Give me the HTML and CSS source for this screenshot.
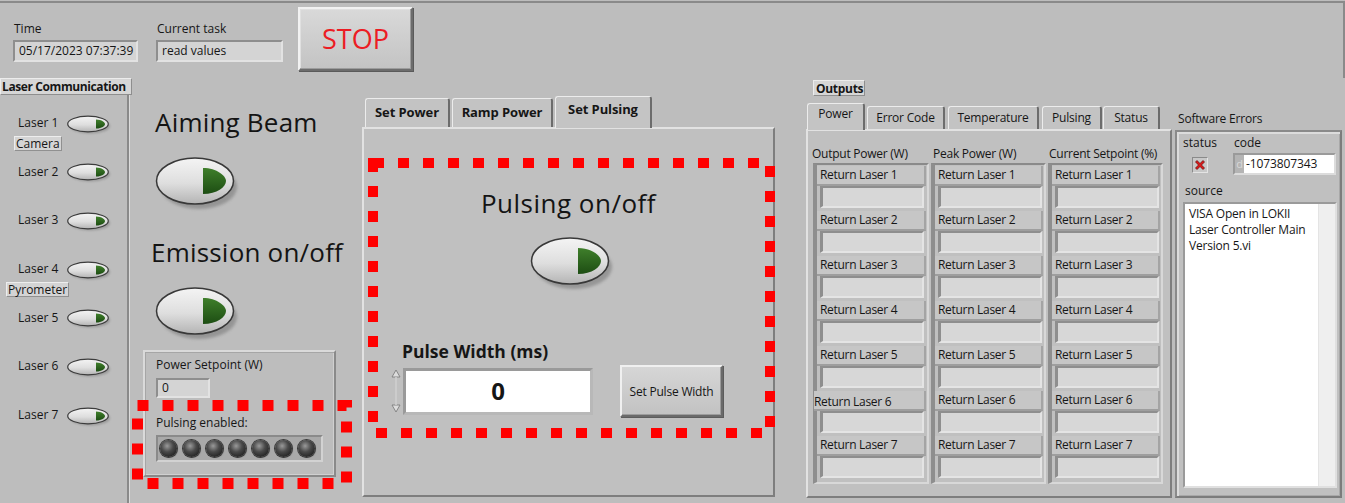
FILE: index.html
```html
<!DOCTYPE html>
<html>
<head>
<meta charset="utf-8">
<title>Laser Controller</title>
<link rel="stylesheet" href="styles.css">
</head>
<body>
<div class="app">
  <svg class="defs" width="0" height="0" aria-hidden="true">
    <defs>
      <linearGradient id="swBody" x1="0" y1="0" x2="0" y2="1">
        <stop offset="0" stop-color="#f4f4f4"/>
        <stop offset="0.55" stop-color="#dedede"/>
        <stop offset="1" stop-color="#b4b4b4"/>
      </linearGradient>
      <linearGradient id="swGreen" x1="0" y1="0" x2="0" y2="1">
        <stop offset="0" stop-color="#3f7f2b"/>
        <stop offset="1" stop-color="#1d4d13"/>
      </linearGradient>
      <filter id="swBlur" x="-20%" y="-20%" width="140%" height="140%"><feGaussianBlur stdDeviation="1.8"/></filter>
      <filter id="swBlurS" x="-20%" y="-20%" width="140%" height="140%"><feGaussianBlur stdDeviation="1"/></filter>
    </defs>
  </svg>

  <header class="top">
    <div class="fg fg-time">
      <div class="lbl">Time</div>
      <div class="ind ind-time">05/17/2023 07:37:39</div>
    </div>
    <div class="fg fg-task">
      <div class="lbl">Current task</div>
      <div class="ind ind-task">read values</div>
    </div>
    <button class="stop">STOP</button>
  </header>

  <div class="main">
    <section class="lasers">
      <div class="caption caption-lc">Laser Communication</div>
      <div class="laser-panel">
        <div class="laser">
          <div class="lrow"><span class="lname">Laser 1</span>
            <svg class="sw-small" viewBox="0 0 48 22" width="48" height="22"><ellipse cx="23" cy="11" rx="20" ry="7.5" fill="#7c7c7c" opacity="0.55" filter="url(#swBlurS)"/><ellipse cx="21" cy="9" rx="20.3" ry="7.8" fill="url(#swBody)" stroke="#3c3c3c" stroke-width="1.2"/><path d="M29 4.5 C35 4.5 38 7.5 38 9 C38 10.8 35 13.5 29 13.5 Z" fill="url(#swGreen)"/></svg>
          </div>
          <div class="tag tag-camera">Camera</div>
        </div>
        <div class="laser">
          <div class="lrow"><span class="lname">Laser 2</span>
            <svg class="sw-small" viewBox="0 0 48 22" width="48" height="22"><ellipse cx="23" cy="11" rx="20" ry="7.5" fill="#7c7c7c" opacity="0.55" filter="url(#swBlurS)"/><ellipse cx="21" cy="9" rx="20.3" ry="7.8" fill="url(#swBody)" stroke="#3c3c3c" stroke-width="1.2"/><path d="M29 4.5 C35 4.5 38 7.5 38 9 C38 10.8 35 13.5 29 13.5 Z" fill="url(#swGreen)"/></svg>
          </div>
        </div>
        <div class="laser">
          <div class="lrow"><span class="lname">Laser 3</span>
            <svg class="sw-small" viewBox="0 0 48 22" width="48" height="22"><ellipse cx="23" cy="11" rx="20" ry="7.5" fill="#7c7c7c" opacity="0.55" filter="url(#swBlurS)"/><ellipse cx="21" cy="9" rx="20.3" ry="7.8" fill="url(#swBody)" stroke="#3c3c3c" stroke-width="1.2"/><path d="M29 4.5 C35 4.5 38 7.5 38 9 C38 10.8 35 13.5 29 13.5 Z" fill="url(#swGreen)"/></svg>
          </div>
        </div>
        <div class="laser">
          <div class="lrow"><span class="lname">Laser 4</span>
            <svg class="sw-small" viewBox="0 0 48 22" width="48" height="22"><ellipse cx="23" cy="11" rx="20" ry="7.5" fill="#7c7c7c" opacity="0.55" filter="url(#swBlurS)"/><ellipse cx="21" cy="9" rx="20.3" ry="7.8" fill="url(#swBody)" stroke="#3c3c3c" stroke-width="1.2"/><path d="M29 4.5 C35 4.5 38 7.5 38 9 C38 10.8 35 13.5 29 13.5 Z" fill="url(#swGreen)"/></svg>
          </div>
          <div class="tag tag-pyro">Pyrometer</div>
        </div>
        <div class="laser">
          <div class="lrow"><span class="lname">Laser 5</span>
            <svg class="sw-small" viewBox="0 0 48 22" width="48" height="22"><ellipse cx="23" cy="11" rx="20" ry="7.5" fill="#7c7c7c" opacity="0.55" filter="url(#swBlurS)"/><ellipse cx="21" cy="9" rx="20.3" ry="7.8" fill="url(#swBody)" stroke="#3c3c3c" stroke-width="1.2"/><path d="M29 4.5 C35 4.5 38 7.5 38 9 C38 10.8 35 13.5 29 13.5 Z" fill="url(#swGreen)"/></svg>
          </div>
        </div>
        <div class="laser">
          <div class="lrow"><span class="lname">Laser 6</span>
            <svg class="sw-small" viewBox="0 0 48 22" width="48" height="22"><ellipse cx="23" cy="11" rx="20" ry="7.5" fill="#7c7c7c" opacity="0.55" filter="url(#swBlurS)"/><ellipse cx="21" cy="9" rx="20.3" ry="7.8" fill="url(#swBody)" stroke="#3c3c3c" stroke-width="1.2"/><path d="M29 4.5 C35 4.5 38 7.5 38 9 C38 10.8 35 13.5 29 13.5 Z" fill="url(#swGreen)"/></svg>
          </div>
        </div>
        <div class="laser">
          <div class="lrow"><span class="lname">Laser 7</span>
            <svg class="sw-small" viewBox="0 0 48 22" width="48" height="22"><ellipse cx="23" cy="11" rx="20" ry="7.5" fill="#7c7c7c" opacity="0.55" filter="url(#swBlurS)"/><ellipse cx="21" cy="9" rx="20.3" ry="7.8" fill="url(#swBody)" stroke="#3c3c3c" stroke-width="1.2"/><path d="M29 4.5 C35 4.5 38 7.5 38 9 C38 10.8 35 13.5 29 13.5 Z" fill="url(#swGreen)"/></svg>
          </div>
        </div>
      </div>
    </section>

    <section class="center">
      <div class="controls">
        <h2 class="big-label lbl-aim">Aiming Beam</h2>
        <svg class="sw-big sw-aim" viewBox="0 0 88 58" width="88" height="58"><ellipse cx="44" cy="30" rx="38" ry="22" fill="#7a7a7a" opacity="0.6" filter="url(#swBlur)"/><ellipse cx="40" cy="24" rx="38.5" ry="23" fill="url(#swBody)" stroke="#383838" stroke-width="1.5"/><path d="M48 11 C62 11 71 19 71 24 C71 30 62 37 48 37 Z" fill="url(#swGreen)"/></svg>
        <h2 class="big-label lbl-emis">Emission on/off</h2>
        <svg class="sw-big sw-emis" viewBox="0 0 88 58" width="88" height="58"><ellipse cx="44" cy="30" rx="38" ry="22" fill="#7a7a7a" opacity="0.6" filter="url(#swBlur)"/><ellipse cx="40" cy="24" rx="38.5" ry="23" fill="url(#swBody)" stroke="#383838" stroke-width="1.5"/><path d="M48 11 C62 11 71 19 71 24 C71 30 62 37 48 37 Z" fill="url(#swGreen)"/></svg>
        <div class="ps-frame">
          <div class="lbl ps-lbl">Power Setpoint (W)</div>
          <div class="ind ind-ps">0</div>
          <div class="lbl pe-lbl">Pulsing enabled:</div>
          <div class="ledbar">
            <span class="led"></span><span class="led"></span><span class="led"></span><span class="led"></span><span class="led"></span><span class="led"></span><span class="led"></span>
          </div>
        </div>
      </div>

      <div class="tabctl">
        <div class="tabs">
          <div class="tab tab-sp">Set Power</div>
          <div class="tab tab-rp">Ramp Power</div>
          <div class="tab tab-spu active">Set Pulsing</div>
        </div>
        <div class="tabbody">
          <h2 class="big-label lbl-pulse">Pulsing on/off</h2>
          <svg class="sw-big sw-pulse" viewBox="0 0 88 58" width="88" height="58"><ellipse cx="44" cy="30" rx="38" ry="22" fill="#7a7a7a" opacity="0.6" filter="url(#swBlur)"/><ellipse cx="40" cy="24" rx="38.5" ry="23" fill="url(#swBody)" stroke="#383838" stroke-width="1.5"/><path d="M48 11 C62 11 71 19 71 24 C71 30 62 37 48 37 Z" fill="url(#swGreen)"/></svg>
          <div class="pw-label">Pulse Width (ms)</div>
          <div class="pw-row">
            <svg class="spin" viewBox="0 0 12 48" width="12" height="48"><path d="M2 10 L6 3 L10 10 Z" fill="#dcdcdc" stroke="#7e7e7e" stroke-width="0.9"/><path d="M2 38 L6 45 L10 38 Z" fill="#dcdcdc" stroke="#7e7e7e" stroke-width="0.9"/><rect x="5.2" y="10" width="1.6" height="28" fill="#cfcfcf"/></svg>
            <div class="pw-field">0</div>
            <button class="pw-btn">Set Pulse Width</button>
          </div>
        </div>
      </div>
    </section>

    <section class="outputs">
      <div class="caption caption-out">Outputs</div>
      <div class="otabs">
        <div class="otab ot-power active">Power</div>
        <div class="otab ot-err">Error Code</div>
        <div class="otab ot-temp">Temperature</div>
        <div class="otab ot-pul">Pulsing</div>
        <div class="otab ot-stat">Status</div>
      </div>
      <div class="obody">
        <div class="ohead">
          <span class="oh oh1">Output Power (W)</span>
          <span class="oh oh2">Peak Power (W)</span>
          <span class="oh oh3">Current Setpoint (%)</span>
        </div>
        <div class="ocols">
          <div class="ocol">
            <div class="orow"><div class="olbl">Return Laser 1</div><div class="ofld"></div></div>
            <div class="orow"><div class="olbl">Return Laser 2</div><div class="ofld"></div></div>
            <div class="orow"><div class="olbl">Return Laser 3</div><div class="ofld"></div></div>
            <div class="orow"><div class="olbl">Return Laser 4</div><div class="ofld"></div></div>
            <div class="orow"><div class="olbl">Return Laser 5</div><div class="ofld"></div></div>
            <div class="orow"><div class="olbl olbl-odd">Return Laser 6</div><div class="ofld"></div></div>
            <div class="orow"><div class="olbl">Return Laser 7</div><div class="ofld"></div></div>
          </div>
          <div class="ocol">
            <div class="orow"><div class="olbl">Return Laser 1</div><div class="ofld"></div></div>
            <div class="orow"><div class="olbl">Return Laser 2</div><div class="ofld"></div></div>
            <div class="orow"><div class="olbl">Return Laser 3</div><div class="ofld"></div></div>
            <div class="orow"><div class="olbl">Return Laser 4</div><div class="ofld"></div></div>
            <div class="orow"><div class="olbl">Return Laser 5</div><div class="ofld"></div></div>
            <div class="orow"><div class="olbl">Return Laser 6</div><div class="ofld"></div></div>
            <div class="orow"><div class="olbl">Return Laser 7</div><div class="ofld"></div></div>
          </div>
          <div class="ocol">
            <div class="orow"><div class="olbl">Return Laser 1</div><div class="ofld"></div></div>
            <div class="orow"><div class="olbl">Return Laser 2</div><div class="ofld"></div></div>
            <div class="orow"><div class="olbl">Return Laser 3</div><div class="ofld"></div></div>
            <div class="orow"><div class="olbl">Return Laser 4</div><div class="ofld"></div></div>
            <div class="orow"><div class="olbl">Return Laser 5</div><div class="ofld"></div></div>
            <div class="orow"><div class="olbl">Return Laser 6</div><div class="ofld"></div></div>
            <div class="orow"><div class="olbl">Return Laser 7</div><div class="ofld"></div></div>
          </div>
        </div>
      </div>
    </section>

    <section class="errors">
      <div class="lbl se-title">Software Errors</div>
      <div class="se-frame">
        <div class="se-grid">
          <div class="se-status">
            <div class="lbl">status</div>
            <div class="se-led">
              <svg viewBox="0 0 12 12" width="12" height="12"><path d="M1.5 3 L3 1.5 L6 4.5 L9 1.5 L10.5 3 L7.5 6 L10.5 9 L9 10.5 L6 7.5 L3 10.5 L1.5 9 L4.5 6 Z" fill="#e01818" stroke="#5a0a0a" stroke-width="0.7"/></svg>
            </div>
          </div>
          <div class="se-code">
            <div class="lbl">code</div>
            <div class="se-codefld"><span class="se-radix">d</span><span class="se-val">-1073807343</span></div>
          </div>
        </div>
        <div class="lbl se-srclbl">source</div>
        <div class="se-src">
          <div class="se-text">VISA Open in LOKII<br>Laser Controller Main<br>Version 5.vi</div>
          <div class="se-scroll"></div>
        </div>
      </div>
    </section>
  </div>

  <svg class="anno anno-pulse" viewBox="0 0 407 280" width="407" height="280"><rect x="5" y="5" width="397" height="270" fill="none" stroke="#ff0000" stroke-width="10" stroke-dasharray="11 14"/></svg>
  <svg class="anno anno-led" viewBox="0 0 220 89" width="220" height="89"><rect x="5.5" y="5.5" width="209" height="78" fill="none" stroke="#ff0000" stroke-width="11" stroke-dasharray="11 14"/></svg>
</div>
</body>
</html>
```

FILE: styles.css
```css
* { box-sizing: border-box; }
html, body { margin: 0; padding: 0; }
body {
  background: #bdbdbd;
  font-family: "Open Sans", "Liberation Sans", sans-serif;
  font-size: 12px;
  color: #161616;
}
.app {
  position: relative;
  width: 1345px;
  height: 503px;
  overflow: hidden;
  background: #bdbdbd;
}
.defs { display: block; width: 0; height: 0; }

.lbl { font-size: 12px; line-height: 16px; white-space: nowrap; }

.ind {
  height: 22px;
  background: #d4d4d4;
  border: 2px solid;
  border-color: #8e8e8e #e2e2e2 #e2e2e2 #8e8e8e;
  padding: 0 4px;
  line-height: 18px;
  font-size: 12px;
  white-space: nowrap;
}

/* ---------- top bar ---------- */
.top {
  height: 77px;
  margin-top: 1px;
  border-top: 2px solid #8a8a8a;
  border-right: 2px solid #8a8a8a;
  display: flex;
  align-items: flex-start;
  padding-left: 13px;
}
.fg { margin-top: 18px; }
.fg .ind { margin-top: 3px; }
.fg .lbl { padding-left: 1px; }
.ind-time { width: 125px; }
.fg-task { margin-left: 18px; }
.ind-task { width: 127px; }
.stop {
  margin: 4px 0 0 15px;
  width: 115px;
  height: 64px;
  padding: 0;
  background: linear-gradient(#d9d9d9, #c3c3c3);
  border: 2px solid;
  border-color: #f2f2f2 #6c6c6c #6c6c6c #f2f2f2;
  box-shadow: inset -1px -1px 0 #9c9c9c, inset 1px 1px 0 #e0e0e0, 1px 1px 0 #5a5a5a;
  color: #ec1c24;
  font-family: "Open Sans", "Liberation Sans", sans-serif;
  font-size: 27px;
  line-height: 30px;
}

/* ---------- main ---------- */
.main { display: flex; height: 425px; }

.caption {
  font-weight: 700;
  font-size: 12px;
  line-height: 15px;
  height: 17px;
  background: #d6d6d6;
  border: 1px solid;
  border-color: #ececec #8e8e8e #8e8e8e #ececec;
  white-space: nowrap;
}

/* lasers */
.lasers { width: 131px; flex: none; display: flex; flex-direction: column; }
.caption-lc { width: 132px; padding-left: 1px; letter-spacing: -0.4px; position: relative; z-index: 1; }
.laser-panel {
  flex: 1;
  border-right: 2px solid #8a8a8a;
  box-shadow: 1px 0 0 #dcdcdc;
  margin-right: 2px;
  padding-top: 18px;
}
.laser { height: 48.7px; }
.lrow { display: flex; align-items: center; height: 22px; padding-left: 18px; }
.lname { width: 49px; font-size: 12px; line-height: 16px; margin-top: -2px; }
.sw-small { display: block; margin-top: 3px; }
.tag {
  display: inline-block;
  height: 15px;
  line-height: 13px;
  background: #d4d4d4;
  border: 1px solid;
  border-color: #ededed #909090 #909090 #ededed;
  padding: 0 1px;
  font-size: 12px;
  position: relative;
  z-index: 1;
}
.tag-camera { margin: -1px 0 0 14px; width: 48px; }
.tag-pyro { margin: 0 0 0 6px; width: 63px; }

/* center */
.center { width: 675px; flex: none; display: flex; }
.controls { width: 231px; padding-left: 12px; display: flex; flex-direction: column; align-items: flex-start; }
.big-label {
  margin: 0;
  font-weight: 400;
  font-size: 26px;
  line-height: 30px;
  white-space: nowrap;
  color: #141414;
  letter-spacing: 0.2px;
}
.lbl-aim { margin: 29px 0 0 12px; }
.sw-big { display: block; }
.sw-aim { margin: 20px 0 0 12px; }
.lbl-emis { margin: 22px 0 0 8px; }
.sw-emis { margin: 20px 0 0 12px; }

.ps-frame {
  margin-top: 5px;
  width: 193px;
  height: 127px;
  border: 2px solid;
  border-color: #dadada #8a8a8a #8a8a8a #dadada;
  box-shadow: inset 1px 1px 0 #a6a6a6, inset -1px -1px 0 #d0d0d0;
  padding: 5px 0 0 11px;
}
.ind-ps { margin-top: 5px; width: 54px; height: 20px; line-height: 16px; }
.pe-lbl { margin-top: 17px; }
.ledbar {
  margin-top: 4px;
  width: 167px;
  height: 27px;
  background: #a9a9a9;
  border: 2px solid;
  border-color: #8a8a8a #d2d2d2 #d2d2d2 #8a8a8a;
  display: flex;
  align-items: center;
  padding-left: 2px;
  gap: 6px;
}
.led {
  width: 17px;
  height: 17px;
  border-radius: 50%;
  background: radial-gradient(circle at 42% 35%, #9a9a9a 0, #4a4a4a 40%, #262626 75%, #1a1a1a 100%);
  box-shadow: 0 0 0 1px #3a3a3a, 1px 1px 1px #777;
}

/* tab control */
.tabctl { width: 413px; margin-top: 18px; }
.tabs { display: flex; align-items: flex-end; height: 31px; padding-left: 3px; }
.tab {
  height: 29px;
  background: #c3c3c3;
  border: 1px solid;
  border-bottom: none;
  border-color: #ececec #6c6c6c #6c6c6c #ececec;
  border-right-width: 2px;
  border-radius: 3px 3px 0 0;
  font-weight: 700;
  font-size: 13px;
  line-height: 26px;
  text-align: center;
  white-space: nowrap;
  letter-spacing: -0.1px;
}
.tab-sp { width: 85px; }
.tab-rp { width: 101px; margin-left: 2px; }
.tab-spu { width: 97px; margin-left: 2px; }
.tab.active {
  height: 32px;
  margin-bottom: -1px;
  line-height: 24px;
  background: #c4c4c4;
  position: relative;
  z-index: 1;
}
.tabbody {
  height: 370px;
  background: #c0c0c0;
  border: 2px solid;
  border-color: #e2e2e2 #7e7e7e #7e7e7e #e2e2e2;
  display: flex;
  flex-direction: column;
}
.lbl-pulse { margin-top: 59px; align-self: center; letter-spacing: 0.5px; }
.sw-pulse { margin: 19px 0 0 166px; }
.pw-label {
  margin: 45px 0 0 38px;
  font-weight: 700;
  font-size: 17.5px;
  line-height: 22px;
  white-space: nowrap;
}
.pw-row { display: flex; align-items: center; margin: 3px 0 0 26px; }
.spin { display: block; }
.pw-field {
  margin-left: 1px;
  width: 190px;
  height: 47px;
  background: #ffffff;
  border: 3px solid;
  border-color: #9a9a9a #b8b8b8 #b8b8b8 #9a9a9a;
  text-align: center;
  font-weight: 700;
  font-size: 24px;
  line-height: 40px;
}
.pw-btn {
  margin-left: 27px;
  width: 103px;
  height: 52px;
  padding: 0;
  background: linear-gradient(#d6d6d6, #c2c2c2);
  border: 2px solid;
  border-color: #f0f0f0 #6a6a6a #6a6a6a #f0f0f0;
  box-shadow: inset -1px -1px 0 #9c9c9c, 1px 1px 0 #5c5c5c;
  font-family: "Open Sans", "Liberation Sans", sans-serif;
  font-size: 12px;
  color: #161616;
  white-space: nowrap;
  letter-spacing: -0.2px;
}

/* outputs */
.outputs { width: 366px; flex: none; display: flex; flex-direction: column; align-items: flex-start; }
.caption-out { margin: 2px 0 0 7px; width: 52px; height: 16px; padding-left: 2px; letter-spacing: -0.3px; }
.otabs { display: flex; align-items: flex-end; margin-top: 7px; height: 26px; }
.otab {
  height: 23px;
  background: #c3c3c3;
  border: 1px solid;
  border-bottom: none;
  border-color: #ececec #6c6c6c #6c6c6c #ececec;
  border-right-width: 2px;
  border-radius: 3px 3px 0 0;
  font-size: 12px;
  line-height: 21px;
  text-align: center;
  white-space: nowrap;
  letter-spacing: -0.2px;
}
.otab.active { height: 27px; margin-bottom: -1px; line-height: 20px; position: relative; z-index: 1; background: #c4c4c4; }
.ot-power { width: 58px; margin-left: 1px; }
.ot-err { width: 78px; margin-left: 2px; }
.ot-temp { width: 91px; margin-left: 3px; }
.ot-pul { width: 60px; margin-left: 3px; }
.ot-stat { width: 57px; margin-left: 1px; }
.obody {
  width: 366px;
  height: 369px;
  background: #c0c0c0;
  border: 2px solid;
  border-color: #e2e2e2 #7e7e7e #7e7e7e #e2e2e2;
  padding: 15px 0 0 4px;
}
.ohead { display: flex; height: 17px; font-size: 12px; line-height: 16px; white-space: nowrap; letter-spacing: -0.25px; }
.oh { display: block; }
.oh1 { width: 121px; }
.oh2 { width: 116px; }
.ocols { display: grid; grid-template-columns: 116px 115px 115px; column-gap: 2px; margin-top: 0; padding-left: 1px; }
.ocol {
  height: 321px;
  border: 2px solid;
  border-left-width: 4px;
  border-color: #8a8a8a #d8d8d8 #d8d8d8 #8e8e8e;
  padding: 1px 1px 0 0;
  display: flex;
  flex-direction: column;
  gap: 3px;
}
.orow { height: 42px; display: flex; flex-direction: column; }
.olbl {
  height: 20px;
  background: #c6c6c6;
  border-bottom: 2px solid #9e9e9e;
  border-right: 2px solid #a4a4a4;
  font-size: 12px;
  line-height: 17px;
  padding-left: 3px;
  white-space: nowrap;
  letter-spacing: -0.3px;
}
.olbl-odd { padding-left: 0; margin-left: -3px; line-height: 21px; }
.ofld {
  height: 22px;
  margin-left: 3px;
  width: 104px;
  background: #d7d7d7;
  border: 2px solid;
  border-color: #8e8e8e #e4e4e4 #e4e4e4 #8e8e8e;
  border-left-width: 3px;
}

/* software errors */
.errors { width: 173px; flex: none; display: flex; flex-direction: column; align-items: flex-start; }
.se-title { margin: 33px 0 0 6px; letter-spacing: -0.2px; }
.se-frame {
  margin: 3px 0 0 3px;
  width: 167px;
  height: 368px;
  border: 2px solid;
  border-color: #8a8a8a #7c7c7c #7c7c7c #8a8a8a;
  box-shadow: inset 2px 2px 0 #dcdcdc, inset -1px -1px 0 #a8a8a8;
  background: #c0c0c0;
  padding: 3px 0 0 4px;
}
.se-grid { display: flex; }
.se-status { width: 52px; padding-left: 2px; }
.se-led {
  margin: 6px 0 0 9px;
  width: 16px;
  height: 16px;
  background: #c8c8c8;
  border: 1px solid;
  border-color: #8a8a8a #e4e4e4 #e4e4e4 #8a8a8a;
  display: flex;
  align-items: center;
  justify-content: center;
}
.se-led svg { display: block; }
.se-code .lbl { padding-left: 1px; }
.se-codefld {
  margin-top: 2px;
  width: 103px;
  height: 22px;
  display: flex;
  border: 2px solid;
  border-color: #9a9a9a #dcdcdc #dcdcdc #9a9a9a;
  background: #ffffff;
}
.se-radix { width: 9px; background: #b4b4b4; color: #d8d8d8; font-size: 11px; line-height: 18px; text-align: center; }
.se-val { padding-left: 2px; font-size: 12px; line-height: 18px; letter-spacing: -0.1px; }
.se-srclbl { margin: 8px 0 0 4px; }
.se-src {
  margin: 3px 0 0 2px;
  width: 154px;
  height: 286px;
  border: 2px solid;
  border-color: #9a9a9a #e0e0e0 #e0e0e0 #9a9a9a;
  background: #ffffff;
  display: flex;
}
.se-text { flex: 1; padding: 2px 0 0 4px; font-size: 12px; line-height: 16px; letter-spacing: -0.2px; white-space: nowrap; }
.se-scroll { width: 17px; background: #efefef; border-left: 1px solid #e4e4e4; }

/* red annotation boxes drawn over the panel */
.anno { position: absolute; display: block; pointer-events: none; }
.anno-pulse { left: 368px; top: 158px; }
.anno-led { left: 132px; top: 400px; }
```
